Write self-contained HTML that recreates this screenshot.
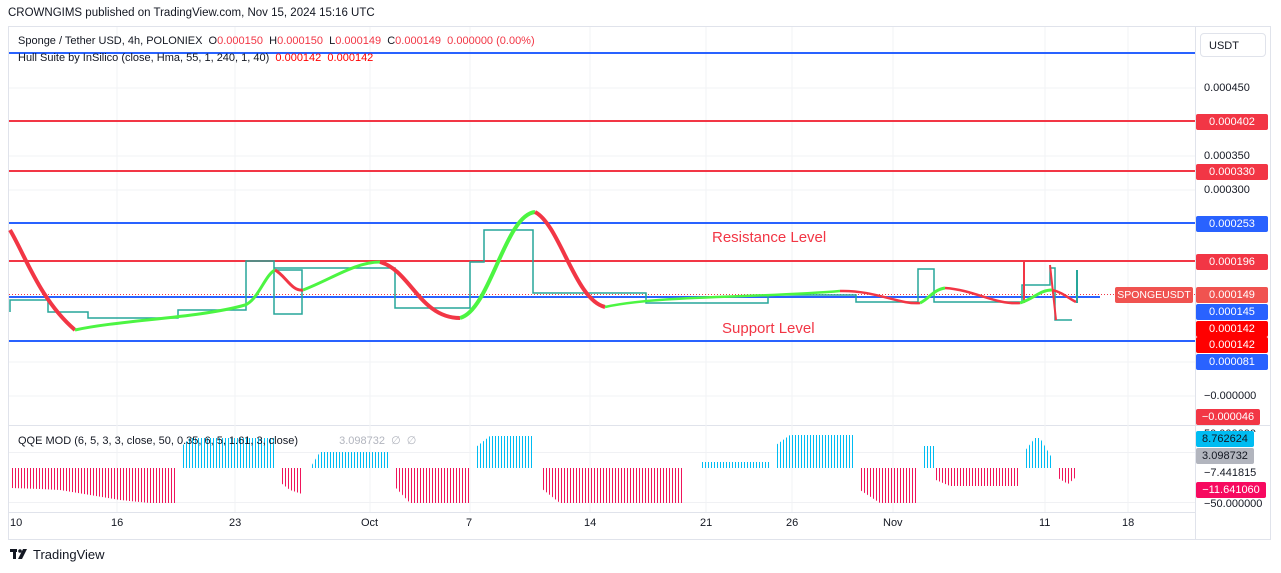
<!DOCTYPE html>
<html><head><meta charset="utf-8"><style>
body{margin:0;width:1281px;height:573px;background:#fff;font-family:"Liberation Sans",sans-serif;overflow:hidden;position:relative}
.t{position:absolute;white-space:nowrap}
.lab{position:absolute;left:1196px;width:72px;height:16px;font-size:11px;line-height:16px;text-align:center;color:#fff;border-radius:2px}
.ax{position:absolute;left:1204px;font-size:11px;color:#131722}
</style></head><body>
<div class="t" style="left:8px;top:7px;font-size:11.5px;color:#131722">CROWNGIMS published on TradingView.com, Nov 15, 2024 15:16 UTC</div>
<svg width="1281" height="573" style="position:absolute;left:0;top:0">
<defs>
<pattern id="pb" width="3" height="10" patternUnits="userSpaceOnUse"><rect width="1" height="10" fill="#00bcf2"/></pattern>
<pattern id="pp" width="3" height="10" patternUnits="userSpaceOnUse"><rect width="1" height="10" fill="#f0145a"/></pattern>
</defs>
<rect x="8.5" y="26.5" width="1262" height="513" fill="none" stroke="#e0e3eb"/>
<line x1="1195.5" y1="27" x2="1195.5" y2="539" stroke="#e0e3eb"/>
<line x1="9" y1="425.5" x2="1270" y2="425.5" stroke="#e0e3eb"/>
<line x1="9" y1="512.5" x2="1195" y2="512.5" stroke="#e0e3eb"/>
<g stroke="#f2f3f5">
<line x1="117" y1="27" x2="117" y2="512"/><line x1="235" y1="27" x2="235" y2="512"/><line x1="370" y1="27" x2="370" y2="512"/><line x1="470" y1="27" x2="470" y2="512"/><line x1="590" y1="27" x2="590" y2="512"/><line x1="706" y1="27" x2="706" y2="512"/><line x1="792" y1="27" x2="792" y2="512"/><line x1="893" y1="27" x2="893" y2="512"/><line x1="1045" y1="27" x2="1045" y2="512"/><line x1="1128" y1="27" x2="1128" y2="512"/>
<line x1="9" y1="88" x2="1195" y2="88"/><line x1="9" y1="156" x2="1195" y2="156"/><line x1="9" y1="190" x2="1195" y2="190"/><line x1="9" y1="396" x2="1195" y2="396"/><line x1="9" y1="362" x2="1195" y2="362"/>
</g>
<g stroke-width="2">
<line x1="9" y1="53" x2="1195" y2="53" stroke="#2962ff"/>
<line x1="9" y1="121" x2="1195" y2="121" stroke="#f23645"/>
<line x1="9" y1="171" x2="1195" y2="171" stroke="#f23645"/>
<line x1="9" y1="223" x2="1195" y2="223" stroke="#2962ff"/>
<line x1="9" y1="261" x2="1195" y2="261" stroke="#f23645"/>
<line x1="9" y1="341" x2="1195" y2="341" stroke="#2962ff"/>
<line x1="9" y1="297" x2="1100" y2="297" stroke="#2962ff"/>
</g>
<line x1="9" y1="294.5" x2="1195" y2="294.5" stroke="#f23645" stroke-dasharray="1 2"/>
<polyline fill="none" stroke="#26a69a" stroke-width="1.5" points="10,312 10,300 48,300 48,312 88,312 88,318 178,318 178,310 246,310 246,261 274,261 274,270 302,270 302,314 274,314 274,268 302,268 370,268 395,268 395,308 470,308 470,262 484,262 484,230 530,230 533,230 533,293 646,293 646,303 768,303 768,295 856,295 856,302 918,302 918,269 934,269 934,302 1022,302 1022,285 1050,285 1050,268 1055,268 1055,320 1072,320"/>
<line x1="1077" y1="270" x2="1077" y2="303" stroke="#26a69a" stroke-width="2"/>
<line x1="1024" y1="262" x2="1024" y2="303" stroke="#f23645" stroke-width="2"/>
<line x1="1050" y1="265" x2="1056" y2="320" stroke="#f23645" stroke-width="2"/>
<path d="M10,230 C25,255 40,300 75,330" fill="none" stroke="#f23645" stroke-width="4"/>
<path d="M75,330 C120,320 200,318 245,305 C258,300 265,275 275,270" fill="none" stroke="#4cf542" stroke-width="3"/>
<path d="M275,270 C285,275 292,292 303,290" fill="none" stroke="#f23645" stroke-width="3"/>
<path d="M303,290 C330,280 355,262 380,262" fill="none" stroke="#4cf542" stroke-width="3"/>
<path d="M380,262 C410,270 420,318 460,318" fill="none" stroke="#f23645" stroke-width="4"/>
<path d="M460,318 C490,310 505,215 535,212" fill="none" stroke="#4cf542" stroke-width="4"/>
<path d="M535,212 C560,225 575,300 605,307" fill="none" stroke="#f23645" stroke-width="4"/>
<path d="M605,307 C660,295 760,298 840,291" fill="none" stroke="#4cf542" stroke-width="2.5"/>
<path d="M840,291 C875,290 900,305 920,303" fill="none" stroke="#f23645" stroke-width="2.5"/>
<path d="M920,303 C930,298 933,290 945,288" fill="none" stroke="#4cf542" stroke-width="3"/>
<path d="M945,288 C975,290 995,305 1020,303" fill="none" stroke="#f23645" stroke-width="2.5"/>
<path d="M1020,303 C1035,298 1040,290 1052,290" fill="none" stroke="#4cf542" stroke-width="3"/>
<path d="M1052,290 C1062,292 1068,298 1076,302" fill="none" stroke="#f23645" stroke-width="2.5"/>
<line x1="9" y1="452.5" x2="1195" y2="452.5" stroke="#f0f1f4"/>
<line x1="9" y1="502.5" x2="1195" y2="502.5" stroke="#f0f1f4"/>
<g>
<path d="M11,468 H176 V503 H150 L120,500 L60,490 L40,489 L11,488Z" fill="url(#pp)"/>
<path d="M183,468 V445 L190,438 H275 V468Z" fill="url(#pb)"/>
<path d="M281,468 H302 V494 L290,490 L281,483Z" fill="url(#pp)"/>
<path d="M310,468 L320,452 H390 V468Z" fill="url(#pb)"/>
<path d="M396,468 H470 V503 H410 L396,488Z" fill="url(#pp)"/>
<path d="M476,468 V447 L490,436 H532 V468Z" fill="url(#pb)"/>
<path d="M541,468 H683 V503 H560 L541,488Z" fill="url(#pp)"/>
<path d="M700,468 V462 H770 V468Z" fill="url(#pb)"/>
<path d="M776,468 V445 L790,435 H855 V468Z" fill="url(#pb)"/>
<path d="M860,468 H918 V503 H880 L860,490Z" fill="url(#pp)"/>
<path d="M924,468 V446 H936 V468Z" fill="url(#pb)"/>
<path d="M936,468 H1020 V486 H950 L936,480Z" fill="url(#pp)"/>
<path d="M1024,468 V452 L1035,438 H1040 L1052,458 V468Z" fill="url(#pb)"/>
<path d="M1058,468 H1075 V478 L1068,484 L1058,478Z" fill="url(#pp)"/>
</g>
<g transform="translate(10,549)" fill="#131722"><rect x="0" y="0" width="7" height="3"/><rect x="3" y="0" width="3" height="10"/><circle cx="10" cy="2" r="1.8"/><path d="M13,0 H17 L12,10 H8Z"/></g>
</svg>
<div class="t" style="left:18px;top:35px;font-size:11px;color:#131722">Sponge / Tether USD, 4h, POLONIEX &nbsp;O<span style="color:#f23645">0.000150</span> &nbsp;H<span style="color:#f23645">0.000150</span> &nbsp;L<span style="color:#f23645">0.000149</span> &nbsp;C<span style="color:#f23645">0.000149</span> &nbsp;<span style="color:#f23645">0.000000 (0.00%)</span></div>
<div class="t" style="left:18px;top:52px;font-size:11px;color:#131722">Hull Suite by InSilico (close, Hma, 55, 1, 240, 1, 40) &nbsp;<span style="color:#ff0000">0.000142</span> &nbsp;<span style="color:#ff0000">0.000142</span></div>
<div class="t" style="left:712px;top:229px;font-size:15px;color:#f23645">Resistance Level</div>
<div class="t" style="left:722px;top:320px;font-size:15px;color:#f23645">Support Level</div>
<div class="t" style="left:18px;top:434px;font-size:11px;color:#131722">QQE MOD (6, 5, 3, 3, close, 50, 0.35, 6, 5, 1.61, 3, close) <span style="color:#b2b5be;margin-left:38px">3.098732 &nbsp;∅ &nbsp;∅</span></div>
<div class="t" style="left:1200px;top:33px;width:66px;height:24px;border:1px solid #e0e3eb;border-radius:4px;font-size:11px;line-height:24px;padding-left:8px;box-sizing:border-box;color:#131722">USDT</div>
<div class="ax" style="top:82px">0.000450</div>
<div class="ax" style="top:150px">0.000350</div>
<div class="ax" style="top:184px">0.000300</div>
<div class="lab" style="top:114px;background:#f23645">0.000402</div>
<div class="lab" style="top:164px;background:#f23645">0.000330</div>
<div class="lab" style="top:216px;background:#2962ff">0.000253</div>
<div class="lab" style="top:254px;background:#f23645">0.000196</div>
<div class="lab" style="top:287px;background:#f05350">0.000149</div>
<div class="t" style="left:1115px;top:287px;width:78px;height:16px;background:#f05350;color:#fff;font-size:10.5px;line-height:16px;text-align:center;border-radius:2px">SPONGEUSDT</div>
<div class="lab" style="top:304px;background:#2962ff">0.000145</div>
<div class="lab" style="top:321px;background:#ff0000">0.000142</div>
<div class="lab" style="top:337px;background:#ff0000">0.000142</div>
<div class="lab" style="top:354px;background:#2962ff">0.000081</div>
<div class="ax" style="top:390px">−0.000000</div>
<div class="lab" style="top:409px;width:64px;background:#f23645">−0.000046</div>
<div class="ax" style="top:428px;height:4px;overflow:hidden">50.000000</div>
<div class="lab" style="top:431px;width:58px;background:#00bcf2;color:#131722">8.762624</div>
<div class="lab" style="top:448px;width:58px;background:#b2b5be;color:#131722">3.098732</div>
<div class="ax" style="top:467px">−7.441815</div>
<div class="lab" style="top:482px;width:70px;background:#f70a60">−11.641060</div>
<div class="ax" style="top:498px;height:11px;overflow:hidden">−50.000000</div>
<div style="position:absolute;top:517px;font-size:11px;color:#131722">
<span class="t" style="left:10px">10</span><span class="t" style="left:111px">16</span><span class="t" style="left:229px">23</span><span class="t" style="left:361px">Oct</span><span class="t" style="left:466px">7</span><span class="t" style="left:584px">14</span><span class="t" style="left:700px">21</span><span class="t" style="left:786px">26</span><span class="t" style="left:883px">Nov</span><span class="t" style="left:1039px">11</span><span class="t" style="left:1122px">18</span></div>
<div class="t" style="left:33px;top:547px;font-size:13px;color:#131722">TradingView</div>
</body></html>
